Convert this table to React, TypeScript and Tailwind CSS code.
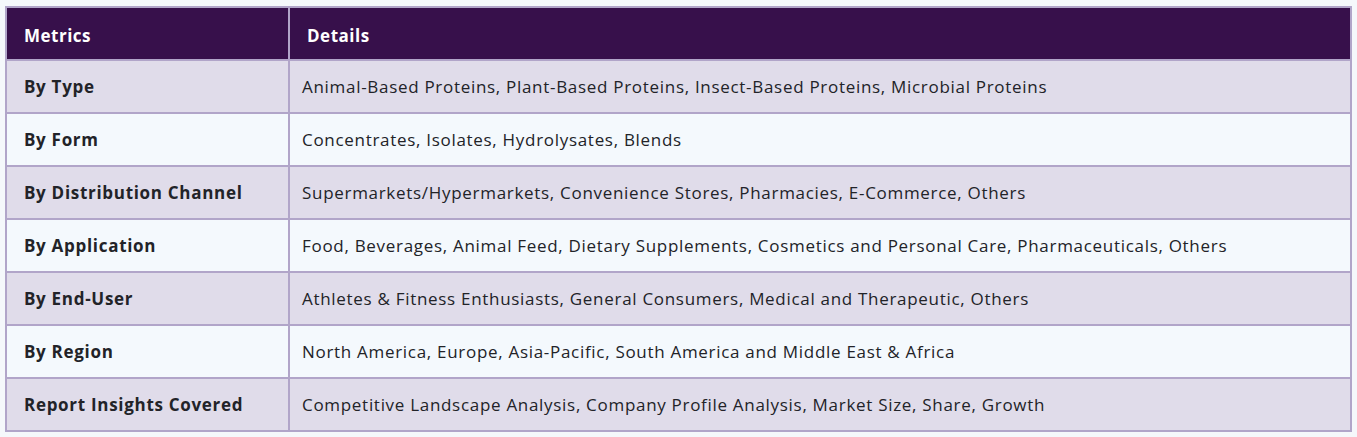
import React from 'react';

const rows: [string, string][] = [
  ['By Type', 'Animal-Based Proteins, Plant-Based Proteins, Insect-Based Proteins, Microbial Proteins'],
  ['By Form', 'Concentrates, Isolates, Hydrolysates, Blends'],
  ['By Distribution Channel', 'Supermarkets/Hypermarkets, Convenience Stores, Pharmacies, E-Commerce, Others'],
  ['By Application', 'Food, Beverages, Animal Feed, Dietary Supplements, Cosmetics and Personal Care, Pharmaceuticals, Others'],
  ['By End-User', 'Athletes & Fitness Enthusiasts, General Consumers, Medical and Therapeutic, Others'],
  ['By Region', 'North America, Europe, Asia-Pacific, South America and Middle East & Africa'],
  ['Report Insights Covered', 'Competitive Landscape Analysis, Company Profile Analysis, Market Size, Share, Growth'],
];

const App: React.FC = () => {
  return (
    <div className="min-h-[437px] bg-[#f5f8fb] pt-[6px] px-[5px]" style={{ fontFamily: '"Open Sans", Lato, sans-serif' }}>
      <div className="w-[1347px] border-2 border-[#b1a5c9]">
        {/* Header */}
        <div className="flex h-[51px] bg-[#37104b] text-white font-bold text-[17px] tracking-[0.5px]">
          <div className="w-[283px] shrink-0 flex items-center pl-[17px] pt-1 border-r-2 border-[#b1a5c9]">Metrics</div>
          <div className="flex-1 flex items-center pl-[17px] pt-1">Details</div>
        </div>
        {rows.map(([metric, detail], i) => (
          <div
            key={metric}
            className={`flex h-[53px] border-t-2 border-[#b1a5c9] text-[17px] tracking-[0.7px] text-[#222328] ${
              i % 2 === 0 ? 'bg-[#e0dcea]' : 'bg-[#f4f9fd]'
            }`}
          >
            <div className="w-[283px] shrink-0 flex items-center pl-[17px] font-bold border-r-2 border-[#b1a5c9]">{metric}</div>
            <div className="flex-1 flex items-center pl-[12px]">{detail}</div>
          </div>
        ))}
      </div>
    </div>
  );
};

export default App;
